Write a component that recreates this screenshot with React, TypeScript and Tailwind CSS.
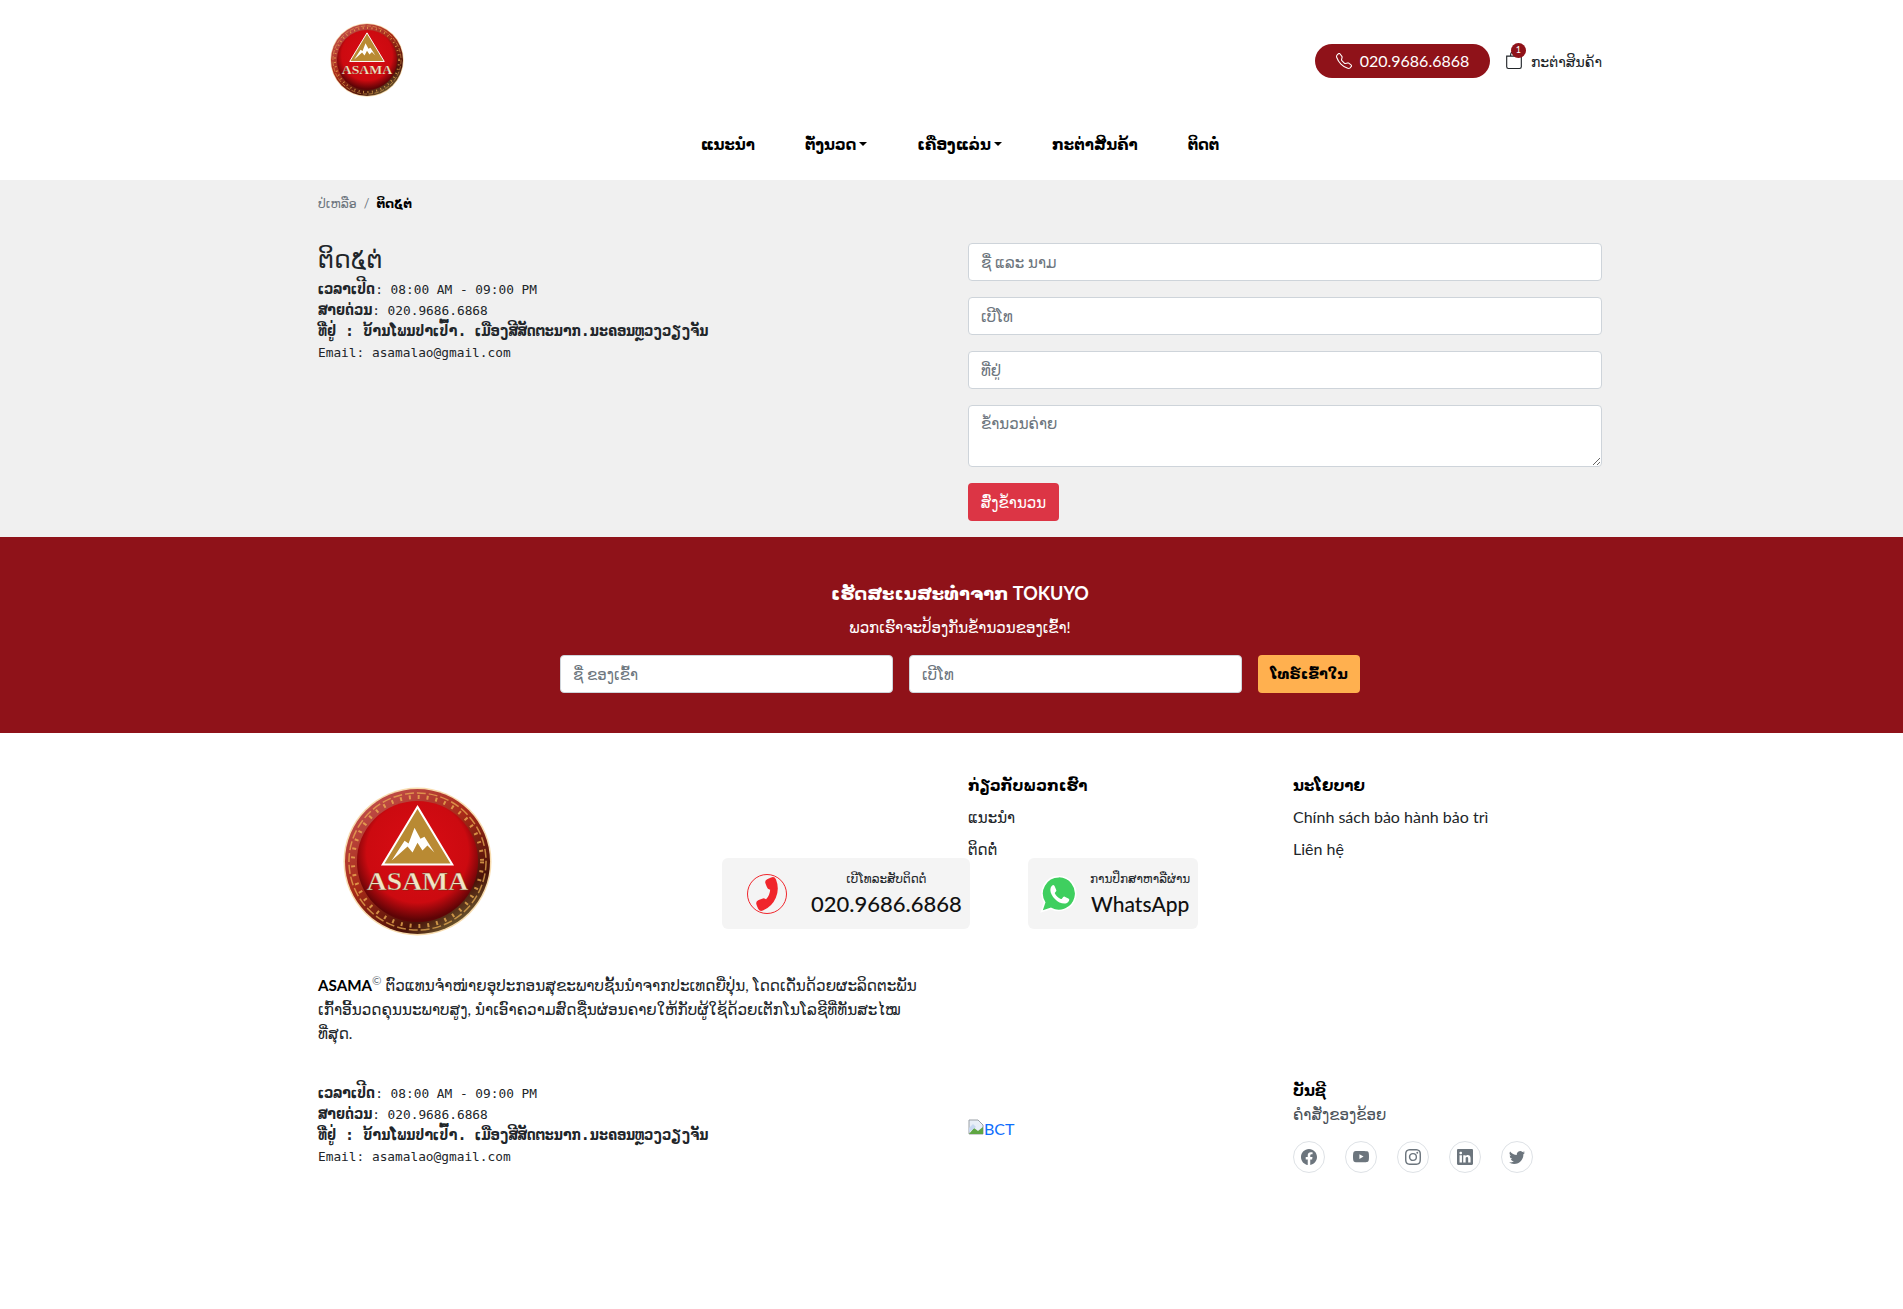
import { BsBag, BsFacebook, BsInstagram, BsLinkedin, BsTelephone, BsTwitter, BsYoutube } from "react-icons/bs";
import { Phone } from "lucide-react";
import type { ReactNode } from "react";

const wrap = "ml-[318px] w-[1284px]";
const field =
  "block h-[38px] rounded-[4px] border border-[#ced4da] bg-white px-3 text-[15px] text-[#212529] placeholder:text-[#6c757d]";

function Logo({ size, id }: { size: number; id: string }) {
  return (
    <svg width={size} height={size} viewBox="0 0 150 150" className="block">
      <defs>
        <radialGradient id={`${id}-face`} cx="50%" cy="42%" r="56%">
          <stop offset="0%" stopColor="#d90c14" />
          <stop offset="75%" stopColor="#cc0a10" />
          <stop offset="100%" stopColor="#5e0406" />
        </radialGradient>
        <linearGradient id={`${id}-rim`} x1="0" y1="0" x2="0.7" y2="1">
          <stop offset="0%" stopColor="#c85a5c" />
          <stop offset="50%" stopColor="#a82a18" />
          <stop offset="85%" stopColor="#4a1208" />
          <stop offset="100%" stopColor="#6b5a30" />
        </linearGradient>
      </defs>
      <circle cx="75" cy="75" r="74.5" fill="#f8dcae" />
      <circle cx="75" cy="75" r="73" fill={`url(#${id}-rim)`} />
      <circle cx="75" cy="75" r="69" fill="none" stroke="#f0b455" strokeWidth="1.5" strokeDasharray="9 3" opacity="0.7" />
      <circle cx="75" cy="75" r="65" fill="none" stroke="#f0b455" strokeWidth="4" strokeDasharray="2 7" opacity="0.75" />
      <circle cx="75" cy="75" r="61" fill={`url(#${id}-face)`} />
      <path d="M75 20 L110 78 L40 78 Z" fill="#b98a33" stroke="#fff" strokeWidth="2" />
      <path
        d="M49 74 L62 54 L66 57 L72 41 L78 52 L82 50 L92 66 L85 59 L80 64 L75 56 L70 66 L65 60 L56 68 Z"
        fill="#fff"
      />
      <text
        x="75"
        y="104"
        textAnchor="middle"
        fontFamily="'Liberation Serif', serif"
        fontWeight="700"
        fontSize="25"
        fill="#f3e3c4"
        stroke="#5b2a10"
        strokeWidth="0.3"
        textLength="102"
        lengthAdjust="spacingAndGlyphs"
      >
        ASAMA
      </text>
    </svg>
  );
}

function Lao({ children }: { children: ReactNode }) {
  return <span className="text-[15px] font-bold">{children}</span>;
}

function Hours() {
  return (
    <div className="font-['DejaVu_Sans_Mono','Liberation_Mono',monospace] text-[12.8px] leading-[21px] text-[#212529]">
      <p className="whitespace-nowrap">
        <Lao>ເວລາເປີດ</Lao>: 08:00 AM - 09:00 PM
      </p>
      <p className="whitespace-nowrap">
        <Lao>ສາຍດ່ວນ</Lao>: 020.9686.6868
      </p>
      <p className="whitespace-nowrap">
        <Lao>ທີ່ຢູ່ : ບ້ານໂພນປາເປົ້າ. ເມືອງສີສັດຕະນາກ.ນະຄອນຫຼວງວຽງຈັນ</Lao>
      </p>
      <p className="whitespace-nowrap">Email: asamalao@gmail.com</p>
    </div>
  );
}

function Header() {
  return (
    <header className="h-[180px] bg-white">
      <div className={`${wrap} flex h-[132px] items-start justify-between pt-[23px]`}>
        <div className="ml-[12px]">
          <Logo size={74} id="top" />
        </div>
        <div className="mt-[21px] flex items-center">
          <a className="flex h-[34px] w-[175px] items-center justify-center gap-2 rounded-full bg-[#8f1219] text-[16px] text-white">
            <BsTelephone size={16} />
            020.9686.6868
          </a>
          <a className="relative ml-[15px] flex items-center gap-[8px] text-[14px] text-[#212529]">
            <BsBag size={18} className="mt-[-2px] text-[#212529]" />
            <span className="absolute left-[6px] top-[-8px] flex h-[15px] w-[15px] items-center justify-center rounded-full bg-[#8f1219] text-[9px] text-white">
              1
            </span>
            ກະຕ່າສິນຄ້າ
          </a>
        </div>
      </div>
      <nav className={`${wrap} flex justify-center gap-[50px] text-[15px] font-bold leading-[24px] text-black`}>
        <a>ແນະນຳ</a>
        <a className="flex items-center gap-[3px]">
          ຕັ່ງນວດ
          <span className="h-0 w-0 border-x-[4px] border-t-[4px] border-x-transparent border-t-black" />
        </a>
        <a className="flex items-center gap-[3px]">
          ເຄື່ອງແລ່ນ
          <span className="h-0 w-0 border-x-[4px] border-t-[4px] border-x-transparent border-t-black" />
        </a>
        <a>ກະຕ່າສິນຄ້າ</a>
        <a>ຕິດຕໍ່</a>
      </nav>
    </header>
  );
}

function Contact() {
  return (
    <section className="h-[357px] bg-[#f0f0f0]">
      <div className={`${wrap} grid grid-cols-[650px_634px]`}>
        <div>
          <div className="flex h-[48px] items-center text-[12.5px] leading-[20px]">
            <span className="text-[#6c757d]">ປ່ເຫລືອ</span>
            <span className="mx-[7px] text-[#6c757d]">/</span>
            <span className="font-bold text-black">ຕິດ໕ຕ່</span>
          </div>
          <h1 className="mt-[14px] text-[25px] leading-[32px] text-[#212529]">ຕິດ໕ຕ່</h1>
          <div className="mt-[5px]">
            <Hours />
          </div>
        </div>
        <form className="flex flex-col gap-4 pt-[63px]">
          <input className={`${field} w-full`} placeholder="ຊື່ ແລະ ນາມ" />
          <input className={`${field} w-full`} placeholder="ເບີໂທ" />
          <input className={`${field} w-full`} placeholder="ທີ່ຢູ່" />
          <textarea className={`${field} h-[62px] w-full py-[6px]`} placeholder="ຂໍ້ານວນຄ່າຍ" />
          <button
            type="button"
            className="h-[38px] w-[91px] rounded-[4px] bg-[#dc3545] text-[15px] text-white"
          >
            ສົ່ງຂໍ້ານວນ
          </button>
        </form>
      </div>
    </section>
  );
}

function Subscribe() {
  return (
    <section className="flex h-[196px] flex-col items-center bg-[#8f1219] pt-[40px] text-white">
      <h2 className="ml-[17px] text-[18px] font-bold leading-[32px]">ເຮັດສະເນສະທໍ່າຈາກ TOKUYO</h2>
      <p className="ml-[17px] mt-[6px] text-[15px] leading-[24px]">ພວກເຮົາຈະປ້ອງກັນຂໍ້ານວນຂອງເຂົ້າ!</p>
      <div className="ml-[17px] mt-[16px] flex w-[800px] gap-4">
        <input className={`${field} w-[333px] shrink-0`} placeholder="ຊື່ ຂອງເຂົ້າ" />
        <input className={`${field} w-[333px] shrink-0`} placeholder="ເບີໂທ" />
        <button
          type="button"
          className="h-[38px] w-[102px] shrink-0 whitespace-nowrap rounded-[4px] bg-[#ffb04f] text-[14.5px] font-bold text-black"
        >
          ໂທຣ໌ເຂົ້າໃນ
        </button>
      </div>
    </section>
  );
}

function FooterHeading({ children }: { children: string }) {
  return <h3 className="text-[15px] font-bold leading-[24px] text-black">{children}</h3>;
}

function Footer() {
  const socials = [BsFacebook, BsYoutube, BsInstagram, BsLinkedin, BsTwitter];
  return (
    <footer className="h-[576px] bg-white">
      <div className={`${wrap} grid grid-cols-[650px_325px_309px] pt-[40px] text-[15px] leading-[24px] text-[#212529]`}>
        <div className="w-[610px]">
          <div className="ml-[25px] mt-[14px]">
            <Logo size={149} id="foot" />
          </div>
          <p className="mt-[37px] text-[15.2px]">
            <b className="font-bold text-black">ASAMA</b>
            <sup className="leading-none text-[#6c757d]">©</sup> ຕົວແທນຈຳໜ່າຍອຸປະກອນສຸຂະພາບຊັ້ນນຳຈາກປະເທດຍີ່ປຸ່ນ, ໂດດເດັ່ນດ້ວຍຜະລິດຕະພັນ
            ເກົ້າອີ້ນວດຄຸນນະພາບສູງ, ນຳເອົາຄວາມສົດຊື່ນຜ່ອນຄາຍໃຫ້ກັບຜູ້ໃຊ້ດ້ວຍເຕັກໂນໂລຊີທີ່ທັນສະໄໝ ທີ່ສຸດ.
          </p>
          <div className="mt-[38px]">
            <Hours />
          </div>
        </div>

        <div>
          <FooterHeading>ກ່ຽວກັບພວກເຮົາ</FooterHeading>
          <ul className="mt-[8px] flex flex-col gap-[8px]">
            <li>ແນະນຳ</li>
            <li>ຕິດຕໍ່</li>
          </ul>
          <a className="mt-[256px] flex items-end text-[16px] text-[#0d6efd]">
            <svg width="16" height="16" viewBox="0 0 16 16" className="mb-[6px]">
              <path d="M1 1h9l5 5v9H1z" fill="#e8eef7" stroke="#9aa0a6" />
              <path d="M1 15l5-6 4 3 5-4v7z" fill="#5fa642" />
              <path d="M1 9l4-4 3 3-7 5z" fill="#c7d8f0" />
            </svg>
            BCT
          </a>
        </div>

        <div>
          <FooterHeading>ນະໂຍບາຍ</FooterHeading>
          <ul className="mt-[8px] flex flex-col gap-[8px] text-[16px]">
            <li>Chính sách bảo hành bảo trì</li>
            <li>Liên hệ</li>
          </ul>
          <div className="mt-[217px]">
            <FooterHeading>ບັນຊີ</FooterHeading>
            <p className="text-[#495057]">ຄຳສັ່ງຂອງຂ້ອຍ</p>
            <div className="mt-[15px] flex gap-5">
              {socials.map((Icon, i) => (
                <span
                  key={i}
                  className="flex h-8 w-8 items-center justify-center rounded-full border border-[#dee2e6] text-[#6c757d]"
                >
                  <Icon size={16} />
                </span>
              ))}
            </div>
          </div>
        </div>
      </div>
    </footer>
  );
}

function FloatingCards() {
  return (
    <>
      <a className="absolute left-[722px] top-[858px] flex h-[71px] w-[248px] items-center rounded-[6px] bg-[#f4f4f4] pl-[25px]">
        <span className="flex h-[40px] w-[40px] items-center justify-center rounded-full border-[1.5px] border-[#f0262c]">
          <Phone size={30} fill="#f0262c" stroke="#f0262c" className="rotate-[-22deg] -scale-x-100" />
        </span>
        <span className="ml-[24px] flex flex-col items-center">
          <span className="text-[12px] leading-[20px] text-[#212529]">ເບີໂທລະສັບຕິດຕໍ່</span>
          <span className="text-[22px] font-medium leading-[30px] text-[#111]">020.9686.6868</span>
        </span>
      </a>
      <a className="absolute left-[1028px] top-[858px] flex h-[71px] w-[170px] items-center rounded-[6px] bg-[#f4f4f4] pl-[12px]">
        <svg width="38" height="38" viewBox="0 0 36 36">
          <path
            d="M18 1.500a16 16 0 0 0-13.600 24.400L1.500 34.500l8.900-2.800A16 16 0 1 0 18 1.500z"
            fill="#3fcf5f"
            stroke="#fff"
            strokeWidth="1.5"
          />
          <path
            d="M12.800 9.500c-1 0-3 1.600-3 4.600 0 5.500 7.200 13 13.300 13 3 0 4.600-2.200 4.600-3.600 0-.7-.3-.9-.9-1.200l-3.400-1.700c-.6-.3-1-.2-1.400.3l-1.300 1.600c-.3.3-.6.4-1 .2-2.400-1-4.400-2.900-5.600-5.100-.2-.4-.1-.7.2-1l1-1.200c.3-.4.3-.7.1-1.100l-1.500-3.600c-.3-.8-.7-1-1.100-1z"
            fill="#fff"
          />
        </svg>
        <span className="ml-[12px] flex flex-col items-center">
          <span className="text-[12px] leading-[20px] text-[#212529]">ການປຶກສາຫາລືຜ່ານ</span>
          <span className="text-[21px] font-medium leading-[30px] text-[#111]">WhatsApp</span>
        </span>
      </a>
    </>
  );
}

export default function App() {
  return (
    <div className="relative h-[1309px] overflow-hidden bg-white font-['Lato','DejaVu_Sans',sans-serif] text-[#212529]">
      <Header />
      <Contact />
      <Subscribe />
      <Footer />
      <FloatingCards />
    </div>
  );
}
